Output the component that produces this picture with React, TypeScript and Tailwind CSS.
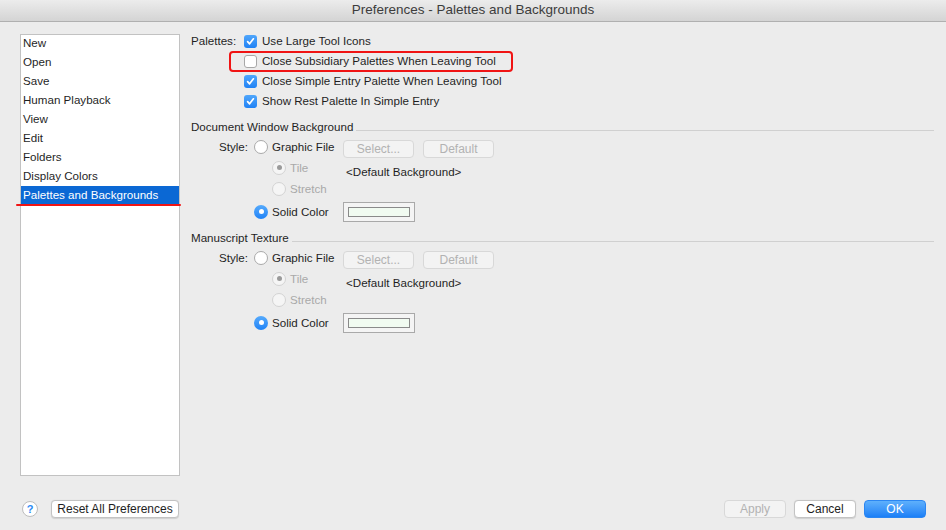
import React from "react";

const sidebarItems = [
  "New",
  "Open",
  "Save",
  "Human Playback",
  "View",
  "Edit",
  "Folders",
  "Display Colors",
  "Palettes and Backgrounds",
];

function Checkbox({ checked }: { checked: boolean }) {
  if (!checked) {
    return (
      <span className="w-[13px] h-[13px] rounded-[3px] bg-white border border-[#a8a8a8] shrink-0" />
    );
  }
  return (
    <span className="w-[13px] h-[13px] rounded-[3px] bg-gradient-to-b from-[#4fa6fb] to-[#1f82f5] flex items-center justify-center shrink-0">
      <svg width="9" height="9" viewBox="0 0 9 9" fill="none">
        <path d="M1.6 4.7 L3.6 6.8 L7.4 1.8" stroke="white" strokeWidth="1.7" strokeLinecap="round" strokeLinejoin="round" />
      </svg>
    </span>
  );
}

function Radio({ state }: { state: "off" | "on" | "disabled" | "disabledOn" }) {
  if (state === "on") {
    return (
      <span className="w-[14px] h-[14px] rounded-full bg-gradient-to-b from-[#55aafc] to-[#1f83f6] flex items-center justify-center shrink-0">
        <span className="w-[5px] h-[5px] rounded-full bg-white" />
      </span>
    );
  }
  if (state === "disabled" || state === "disabledOn") {
    return (
      <span className="w-[14px] h-[14px] rounded-full bg-[#f5f5f5] border border-[#d3d3d3] flex items-center justify-center shrink-0">
        {state === "disabledOn" && <span className="w-[5px] h-[5px] rounded-full bg-[#9a9a9a]" />}
      </span>
    );
  }
  return <span className="w-[14px] h-[14px] rounded-full bg-white border border-[#a9a9a9] shrink-0" />;
}

function Btn({
  children,
  width,
  disabled,
  primary,
}: {
  children: React.ReactNode;
  width: string;
  disabled?: boolean;
  primary?: boolean;
}) {
  let cls = "bg-white border border-[#c3c3c3] text-[#1e1e1e] shadow-[0_0.5px_1px_rgba(0,0,0,0.12)]";
  if (disabled) cls = "bg-[#f3f3f3] border border-[#d8d8d8] text-[#b2b2b2]";
  if (primary) cls = "bg-gradient-to-b from-[#5eb0fc] to-[#1a7ff6] border border-[#2b86f2] text-white";
  return (
    <div className={`${width} h-[18px] rounded-[4px] flex items-center justify-center text-[12px] ${cls}`}>
      {children}
    </div>
  );
}

function BackgroundGroup({ title }: { title: string }) {
  return (
    <div className="flex flex-col">
      <div className="h-[20px] flex items-center">
        <span>{title}</span>
        <div className="flex-1 h-px bg-[#d0d0d0] ml-[3px] mt-[6px]" />
      </div>
      <div className="h-[20px] flex items-center">
        <span className="w-[57px] text-right">Style:</span>
        <div className="w-[89px] ml-[6px] flex items-center gap-[4px]">
          <Radio state="off" />
          <span>Graphic File</span>
        </div>
        <div className="flex gap-[9px] mt-[3px]">
          <Btn width="w-[71px]" disabled>
            Select...
          </Btn>
          <Btn width="w-[71px]" disabled>
            Default
          </Btn>
        </div>
      </div>
      <div className="h-[20px] mt-[1px] flex items-center pl-[81px]">
        <div className="w-[71px] flex items-center gap-[4px] text-[#a9a9a9]">
          <Radio state="disabledOn" />
          <span>Tile</span>
        </div>
        <span className="ml-[3px] mt-[8px]">&lt;Default Background&gt;</span>
      </div>
      <div className="h-[20px] mt-[1px] flex items-center pl-[81px]">
        <div className="flex items-center gap-[4px] text-[#a9a9a9]">
          <Radio state="disabled" />
          <span>Stretch</span>
        </div>
      </div>
      <div className="h-[20px] mt-[3px] flex items-center pl-[63px]">
        <div className="w-[89px] flex items-center gap-[4px]">
          <Radio state="on" />
          <span>Solid Color</span>
        </div>
        <div className="w-[72px] h-[20px] border border-[#a9a9a9] bg-[#f4f4f4] flex items-center justify-center">
          <div className="w-[62px] h-[10px] border border-[#8a8a8a] bg-[#f1fbf1]" />
        </div>
      </div>
    </div>
  );
}

export default function App() {
  return (
    <div className="w-[946px] h-[530px] bg-[#ececec] flex flex-col relative overflow-hidden font-['Liberation_Sans',Arial,sans-serif] text-[11.6px] text-[#1f1f1f]">
      {/* title bar */}
      <div className="h-[22px] shrink-0 bg-gradient-to-b from-[#ececec] to-[#d4d4d4] border-b border-[#b0b0b0] flex items-center justify-center text-[13.5px] text-[#3c3c3c]">
        Preferences - Palettes and Backgrounds
      </div>

      <div className="flex-1 flex pl-[20px] pr-[12px] pt-[9px] min-h-0">
        {/* sidebar */}
        <div className="w-[160px] h-[442px] mt-[3px] bg-white border border-[#c2c2c2] shrink-0">
          <div className="-mt-[1px]">
            {sidebarItems.map((item) => (
              <div
                key={item}
                className={`h-[19px] flex items-center pl-[2px] pb-[1px] ${
                  item === "Palettes and Backgrounds" ? "bg-[#0b68d4] text-white" : ""
                }`}
              >
                {item}
              </div>
            ))}
          </div>
        </div>

        {/* options */}
        <div className="flex-1 ml-[11px] flex flex-col">
          <div className="flex flex-col">
            <div className="h-[20px] flex items-center">
              <span className="w-[53px]">Palettes:</span>
              <Checkbox checked />
              <span className="ml-[5px]">Use Large Tool Icons</span>
            </div>
            <div className="h-[20px] flex items-center pl-[53px]">
              <Checkbox checked={false} />
              <span className="ml-[5px]">Close Subsidiary Palettes When Leaving Tool</span>
            </div>
            <div className="h-[20px] flex items-center pl-[53px]">
              <Checkbox checked />
              <span className="ml-[5px]">Close Simple Entry Palette When Leaving Tool</span>
            </div>
            <div className="h-[20px] flex items-center pl-[53px]">
              <Checkbox checked />
              <span className="ml-[5px]">Show Rest Palette In Simple Entry</span>
            </div>
          </div>

          <div className="mt-[6px]">
            <BackgroundGroup title="Document Window Background" />
          </div>
          <div className="mt-[6px]">
            <BackgroundGroup title="Manuscript Texture" />
          </div>
        </div>
      </div>

      {/* footer */}
      <div className="h-[54px] shrink-0 flex items-start pt-[24px] pl-[22px] pr-[20px]">
        <div className="w-[16px] h-[16px] mt-[1px] rounded-full bg-white border border-[#bdbdbd] flex items-center justify-center text-[11px] font-bold text-[#2a8af5]">
          ?
        </div>
        <div className="ml-[13px]">
          <Btn width="w-[128px]">Reset All Preferences</Btn>
        </div>
        <div className="flex-1" />
        <div className="flex gap-[8px]">
          <Btn width="w-[62px]" disabled>
            Apply
          </Btn>
          <Btn width="w-[62px]">Cancel</Btn>
          <Btn width="w-[62px]" primary>
            OK
          </Btn>
        </div>
      </div>

      {/* annotations */}
      <div className="absolute left-[229px] top-[51px] w-[284px] h-[21px] border-2 border-[#f01414] rounded-[4px]" />
      <div className="absolute left-[16px] top-[204px] w-[165px] h-[2px] bg-[#f01414] rounded-full" />
    </div>
  );
}
